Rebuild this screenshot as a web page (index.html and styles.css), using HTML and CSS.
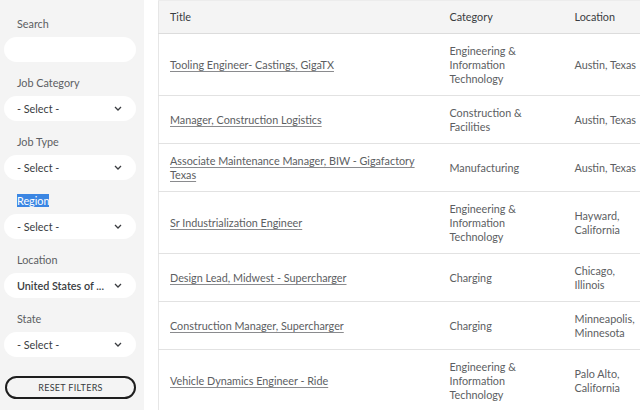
FILE: index.html
```html
<!DOCTYPE html>
<html>
<head>
<meta charset="utf-8">
<link rel="stylesheet" href="styles.css">
</head>
<body>
<div class="page">
  <aside class="filters">
    <div class="group">
      <div class="label">Search</div>
      <div class="field"></div>
    </div>
    <div class="group">
      <div class="label">Job Category</div>
      <div class="field select"><span>- Select -</span><svg class="chev" viewBox="0 0 8 5" width="8" height="5"><path d="M1 1 L4 4 L7 1" fill="none" stroke="#3a3c40" stroke-width="1.3"/></svg></div>
    </div>
    <div class="group">
      <div class="label">Job Type</div>
      <div class="field select"><span>- Select -</span><svg class="chev" viewBox="0 0 8 5" width="8" height="5"><path d="M1 1 L4 4 L7 1" fill="none" stroke="#3a3c40" stroke-width="1.3"/></svg></div>
    </div>
    <div class="group">
      <div class="label"><span class="sel">Region</span></div>
      <div class="field select"><span>- Select -</span><svg class="chev" viewBox="0 0 8 5" width="8" height="5"><path d="M1 1 L4 4 L7 1" fill="none" stroke="#3a3c40" stroke-width="1.3"/></svg></div>
    </div>
    <div class="group">
      <div class="label">Location</div>
      <div class="field select"><span class="val">United States of ...</span><svg class="chev" viewBox="0 0 8 5" width="8" height="5"><path d="M1 1 L4 4 L7 1" fill="none" stroke="#3a3c40" stroke-width="1.3"/></svg></div>
    </div>
    <div class="group">
      <div class="label">State</div>
      <div class="field select"><span>- Select -</span><svg class="chev" viewBox="0 0 8 5" width="8" height="5"><path d="M1 1 L4 4 L7 1" fill="none" stroke="#3a3c40" stroke-width="1.3"/></svg></div>
    </div>
    <button class="reset">RESET FILTERS</button>
  </aside>
  <main class="results">
    <table class="jobs">
      <colgroup>
        <col class="c-title"><col class="c-cat"><col class="c-loc">
      </colgroup>
      <thead>
        <tr><th>Title</th><th>Category</th><th>Location</th></tr>
      </thead>
      <tbody>
        <tr><td><a href="#">Tooling Engineer- Castings, GigaTX</a></td><td>Engineering &amp; Information Technology</td><td>Austin, Texas</td></tr>
        <tr><td><a href="#">Manager, Construction Logistics</a></td><td>Construction &amp; Facilities</td><td>Austin, Texas</td></tr>
        <tr><td><a href="#">Associate Maintenance Manager, BIW - Gigafactory Texas</a></td><td>Manufacturing</td><td>Austin, Texas</td></tr>
        <tr><td><a href="#">Sr Industrialization Engineer</a></td><td>Engineering &amp; Information Technology</td><td>Hayward, California</td></tr>
        <tr><td><a href="#">Design Lead, Midwest - Supercharger</a></td><td>Charging</td><td>Chicago, Illinois</td></tr>
        <tr><td><a href="#">Construction Manager, Supercharger</a></td><td>Charging</td><td>Minneapolis, Minnesota</td></tr>
        <tr><td><a href="#">Vehicle Dynamics Engineer - Ride</a></td><td>Engineering &amp; Information Technology</td><td>Palo Alto, California</td></tr>
      </tbody>
    </table>
  </main>
</div>
</body>
</html>
```
FILE: styles.css
```css
html, body {
  margin: 0;
  padding: 0;
  background: #fff;
  font-family: Lato, "Open Sans", sans-serif;
  color: #5c5e62;
  overflow: hidden;
}
.page {
  display: grid;
  grid-template-columns: 144px 1fr;
  column-gap: 14px;
  height: 410px;
}
.filters {
  background: #f4f4f4;
  padding: 17px 8px 0 4px;
  display: flex;
  flex-direction: column;
}
.group {
  display: flex;
  flex-direction: column;
  margin-bottom: 14px;
}
.label {
  font-size: 10.8px;
  line-height: 14px;
  padding-left: 13px;
  margin-bottom: 6px;
  color: #5c5e62;
}
.sel {
  background: #3b86e3;
  color: #fff;
}
.field {
  height: 25px;
  background: #fff;
  border-radius: 13px;
}
.select {
  display: flex;
  align-items: center;
  justify-content: space-between;
  padding: 0 14px 0 13px;
  font-size: 10.8px;
  color: #393c41;
}
.select .val {
  font-weight: 600;
}
.chev {
  display: block;
}
.reset {
  margin: 5px 0 0 1px;
  height: 23px;
  width: 131px;
  border: 2px solid #1e1e1e;
  border-radius: 12px;
  background: transparent;
  font-family: Lato, "Open Sans", sans-serif;
  font-size: 9px;
  color: #393c41;
  letter-spacing: 0.3px;
  padding: 0;
}
.results {
  overflow: hidden;
}
.jobs {
  border-collapse: collapse;
  table-layout: fixed;
  width: 482px;
  font-size: 10.8px;
  line-height: 14px;
  border-left: 1px solid #e6e6e6;
}
.c-title { width: 280px; }
.c-cat { width: 125px; }
.c-loc { width: 77px; }
th {
  background: #f4f4f4;
  text-align: left;
  font-weight: normal;
  color: #393c41;
  height: 32px;
  padding: 0 0 0 11px;
  border-top: 1px solid #ececec;
  border-bottom: 1px solid #dcdcdc;
}
td {
  padding: 10px 16px 9px 11px;
  vertical-align: middle;
  border-bottom: 1px solid #e2e2e2;
}
td:nth-child(2) { padding-right: 16px; }
td:nth-child(3) { padding-right: 0; }
td a {
  color: #5c5e62;
  text-decoration: underline;
  text-decoration-color: #8a8b8e;
  text-underline-offset: 2px;
}
```
